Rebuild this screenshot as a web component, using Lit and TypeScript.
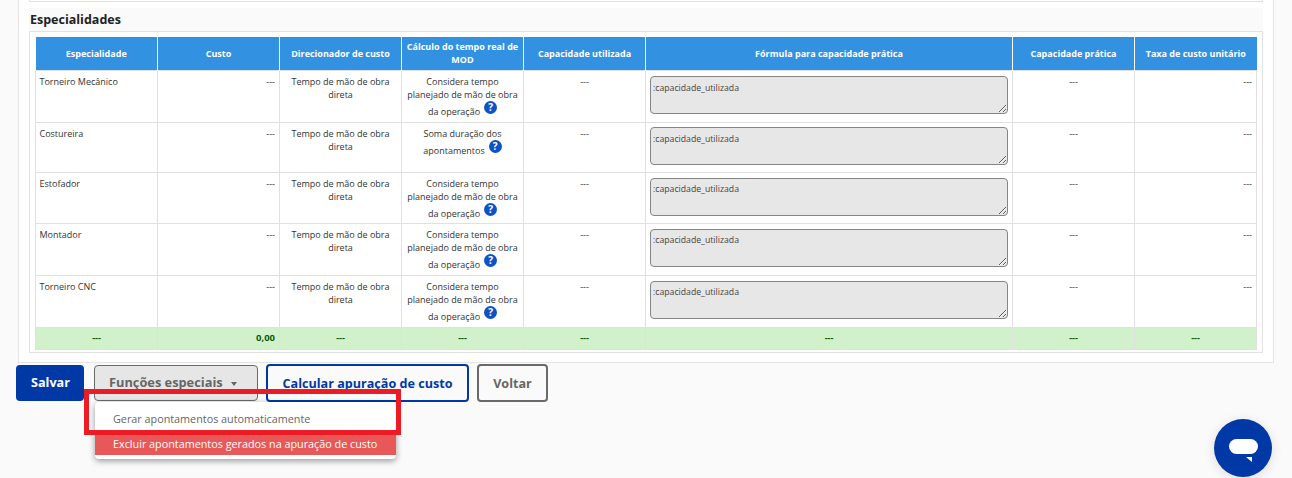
import { LitElement, html, css } from "lit";
import { customElement } from "lit/decorators.js";

const PLANNED = "Considera tempo planejado de mão de obra da operação";
const rows = [
  { name: "Torneiro Mecânico", calc: PLANNED, h: 52, nudge: 0, inset: 5 },
  { name: "Costureira", calc: "Soma duração dos apontamentos", h: 50, nudge: -1, inset: 5 },
  { name: "Estofador", calc: PLANNED, h: 51, nudge: 0, inset: 4 },
  { name: "Montador", calc: PLANNED, h: 52, nudge: 0, inset: 4 },
  { name: "Torneiro CNC", calc: PLANNED, h: 52, nudge: 0, inset: 4 },
];
const heads = [
  "Especialidade",
  "Custo",
  "Direcionador de custo",
  "Cálculo do tempo real de MOD",
  "Capacidade utilizada",
  "Fórmula para capacidade prática",
  "Capacidade prática",
  "Taxa de custo unitário",
];
const widths = [122, 122, 122, 122, 122, 367, 122, 122];

@customElement("app-root")
export class AppRoot extends LitElement {
  static styles = css`
    :host {
      display: block;
      position: relative;
      height: 478px;
      overflow: hidden;
      background: #fafafa;
      font-family: "Open Sans", "Noto Sans", sans-serif;
      font-size: 9px;
      color: #333;
    }
    .outer {
      box-sizing: border-box;
      width: 1256px;
      height: 363px;
      margin-left: 18px;
      padding: 0 10px;
      background: #fff;
      border: 1px solid #e4e4e4;
      border-top: 0;
    }
    .top {
      height: 1px;
      border: 1px solid #e2e2e2;
      border-top: 0;
      margin-bottom: 6px;
    }
    .title {
      height: 23px;
      padding-left: 1px;
      background: #fafafa;
      font-size: 12.5px;
      font-weight: 700;
      line-height: 23px;
      color: #222;
    }
    .frame {
      box-sizing: border-box;
      height: 322px;
      padding: 5px 5px 0;
      border: 1px solid #e2e2e2;
    }
    table {
      table-layout: fixed;
      width: 1221px;
      border-collapse: collapse;
    }
    th {
      box-sizing: border-box;
      height: 33px;
      padding: 0 4px;
      background: #3291e0;
      color: #fff;
      font-size: 9px;
      font-weight: 700;
      line-height: 13px;
      text-align: center;
      border-left: 1px solid #fff;
      border-right: 1px solid #fff;
    }
    th:first-child { border-left: 0; }
    th:last-child { border-right: 0; }
    td {
      box-sizing: border-box;
      padding: 4px 4px 0;
      vertical-align: top;
      line-height: 13px;
      text-align: center;
      border: 1px solid #e0e0e0;
      background: #fff;
      overflow: hidden;
    }
    td.left { text-align: left; padding-left: 3.5px; }
    td.right { text-align: right; }
    td.field { padding-top: 5px; }
    textarea {
      display: block;
      box-sizing: border-box;
      width: 358px;
      height: 38px;
      margin: 0;
      padding: 5px 2px;
      background: #e7e7e7;
      border: 1.5px solid #858585;
      border-radius: 4px;
      color: #444;
      font: 400 8.7px/12px "Open Sans", "Noto Sans", sans-serif;
    }
    .hint {
      display: inline-flex;
      align-items: center;
      justify-content: center;
      width: 13px;
      height: 13px;
      margin-left: 4px;
      border-radius: 50%;
      background: #0f52c6;
      color: #fff;
      font-size: 10px;
      font-weight: 700;
      line-height: 13px;
      vertical-align: 4px;
    }
    tfoot td {
      height: 22px;
      padding: 0 4px 2px;
      vertical-align: middle;
      background: #d1f1ca;
      color: #0a5a0a;
      font-weight: 700;
    }
    .total { font-size: 9.5px; }
    .actions {
      display: flex;
      align-items: center;
      height: 38px;
      margin-top: 1px;
      padding-left: 16px;
    }
    button {
      box-sizing: border-box;
      font-family: inherit;
      font-size: 12.6px;
      font-weight: 700;
      border-radius: 4px;
      background: #fafafa;
      padding: 0;
    }
    .save {
      width: 68px;
      height: 36px;
      padding: 0 0 2px 1px;
      background: #0039a6;
      border: 0;
      color: #fff;
      margin-right: 10px;
    }
    .special {
      display: flex;
      align-items: center;
      gap: 8px;
      width: 164px;
      height: 36px;
      padding: 0 0 2px 14px;
      background: #e6e6e6;
      border: 1.5px solid #6a6a6a;
      color: #666;
      margin-right: 8px;
      font-size: 12.8px;
    }
    .caret {
      width: 0;
      height: 0;
      margin-top: 3px;
      border-left: 3px solid transparent;
      border-right: 3px solid transparent;
      border-top: 4px solid #666;
    }
    .calc {
      width: 203px;
      height: 38px;
      border: 2px solid #0039a6;
      color: #0039a6;
      margin-right: 8px;
    }
    .back {
      width: 71px;
      height: 38px;
      border: 2px solid #6a6a6a;
      color: #666;
    }
    .menu {
      position: absolute;
      left: 95px;
      top: 402px;
      box-sizing: border-box;
      width: 301px;
      height: 57px;
      padding-bottom: 4px;
      background: #fff;
      border-radius: 4px;
      box-shadow: 0 2px 6px rgba(0, 0, 0, 0.4);
      font-size: 10.8px;
      overflow: hidden;
    }
    .menu div {
      padding-left: 18px;
      color: #666;
      height: 33px;
      line-height: 34px;
    }
    .menu .danger {
      height: 20px;
      line-height: 18px;
      background: #e85858;
      color: #fff;
    }
    .mark {
      position: absolute;
      left: 84px;
      top: 389px;
      box-sizing: border-box;
      width: 317px;
      height: 46px;
      border: 5px solid #ed1c24;
      pointer-events: none;
    }
    .chat {
      position: absolute;
      left: 1214px;
      top: 419px;
      width: 58px;
      height: 58px;
      border-radius: 50%;
      background: #0039a6;
      box-shadow: 0 2px 12px rgba(0, 0, 0, 0.12);
    }
    .chat svg { display: block; }
  `;

  render() {
    return html`
      <div class="outer">
        <div class="top"></div>
        <div class="title">Especialidades</div>
        <div class="frame">
          <table>
            <colgroup>${widths.map((w) => html`<col style="width:${w}px" />`)}</colgroup>
            <thead><tr>${heads.map((h) => html`<th>${h}</th>`)}</tr></thead>
            <tbody>
              ${rows.map(
                (r) => html`<tr style="height:${r.h}px">
                  <td class="left">${r.name}</td>
                  <td class="right">---</td>
                  <td>Tempo de mão de obra direta</td>
                  <td>${r.calc}<span class="hint">?</span></td>
                  <td>---</td>
                  <td class="field"><textarea disabled style="margin-top:${r.nudge}px;padding-top:${r.inset}px">:capacidade_utilizada</textarea></td>
                  <td>---</td>
                  <td class="right">---</td>
                </tr>`
              )}
            </tbody>
            <tfoot>
              <tr>
                <td>---</td>
                <td class="right total">0,00</td>
                <td>---</td>
                <td>---</td>
                <td>---</td>
                <td>---</td>
                <td>---</td>
                <td>---</td>
              </tr>
            </tfoot>
          </table>
        </div>
      </div>
      <div class="actions">
        <button class="save">Salvar</button>
        <button class="special">Funções especiais <span class="caret"></span></button>
        <button class="calc">Calcular apuração de custo</button>
        <button class="back">Voltar</button>
      </div>
      <div class="menu">
        <div>Gerar apontamentos automaticamente</div>
        <div class="danger">Excluir apontamentos gerados na apuração de custo</div>
      </div>
      <div class="mark"></div>
      <div class="chat">
        <svg width="58" height="58" viewBox="0 0 58 58">
          <rect x="15" y="20" width="29" height="15" rx="7.5" fill="#fff" />
          <path d="M32 38 L38 38 L38 43 Z" fill="#fff" />
        </svg>
      </div>
    `;
  }
}
